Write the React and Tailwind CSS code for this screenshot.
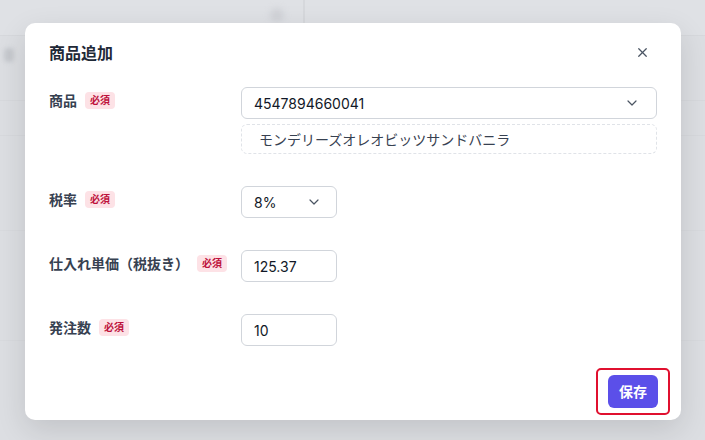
import React from "react";
import { X, ChevronDown } from "lucide-react";

const font = { fontFamily: 'Inter, "Noto Sans CJK JP", sans-serif' };

function Badge() {
  return (
    <span className="ml-2 inline-flex items-center rounded bg-[#fde2e6] px-[5px] h-[17px] text-[10px] font-bold leading-none text-[#be123c]">
      必須
    </span>
  );
}

function Label({ children }) {
  return (
    <div className="flex w-[192px] shrink-0 items-center pt-[2px] h-[24px]">
      <span className="text-[14px] font-bold text-[#374151]">{children}</span>
      <Badge />
    </div>
  );
}

export default function App() {
  return (
    <div
      className="relative h-[440px] w-[705px] overflow-hidden bg-[#dcdee2]"
      style={font}
    >
      {/* faint background page */}
      <div className="absolute left-0 top-0 h-[36px] w-[705px] border-b border-[#d6d8dc] bg-[#dfe1e5]" />
      <div className="absolute left-[270px] top-[8px] h-[14px] w-[14px] rounded-full bg-[#d0d2d7] blur-[3px]" />
      <div className="absolute left-[303px] top-0 h-[36px] w-[2px] bg-[#d6d8dc]" />
      <div className="absolute left-[4px] top-[48px] h-[14px] w-[10px] rounded bg-[#c5c8cd] blur-[2px]" />
      <div className="absolute left-0 top-[100px] h-[1px] w-[705px] bg-[#d7d9dd]" />
      <div className="absolute left-0 top-[135px] h-[1px] w-[705px] bg-[#d7d9dd]" />
      <div className="absolute left-0 top-[230px] h-[1px] w-[705px] bg-[#d8dade]" />
      <div className="absolute left-0 top-[340px] h-[1px] w-[705px] bg-[#d8dade]" />

      {/* dialog */}
      <div className="absolute left-[25px] top-[23px] flex h-[397px] w-[656px] flex-col rounded-[10px] bg-white shadow-[0_10px_30px_rgba(0,0,0,0.12)]">
        <div className="flex h-[64px] items-start justify-between px-6 pt-[18px]">
          <h2 className="text-[16px] font-bold text-[#1f2937]">商品追加</h2>
          <X size={15} strokeWidth={2} className="mr-[7px] mt-[4px] text-[#4b5563]" />
        </div>

        <div className="flex flex-col gap-8 px-6">
          <div className="flex items-start">
            <Label>商品</Label>
            <div className="flex flex-1 flex-col gap-[5px]">
              <div className="flex h-8 items-center justify-between rounded-md border border-[#d1d5db] pl-[12px] pr-[16px]">
                <span className="text-[14px] text-[#111827]">4547894660041</span>
                <ChevronDown size={16} strokeWidth={1.8} className="text-[#4b5563]" />
              </div>
              <div className="flex h-[30px] items-center rounded-md border border-dashed border-[#e0e3e8] pl-[17px]">
                <span className="text-[14px] text-[#374151]">モンデリーズオレオビッツサンドバニラ</span>
              </div>
            </div>
          </div>

          <div className="flex items-start">
            <Label>税率</Label>
            <div className="flex h-8 w-[96px] items-center justify-between rounded-md border border-[#d1d5db] pl-[12px] pr-[14px]">
              <span className="text-[14px] text-[#111827]">8%</span>
              <ChevronDown size={16} strokeWidth={1.8} className="text-[#4b5563]" />
            </div>
          </div>

          <div className="flex items-start">
            <Label>仕入れ単価（税抜き）</Label>
            <div className="flex h-8 w-[96px] items-center rounded-md border border-[#d1d5db] pl-[12px]">
              <span className="text-[14px] text-[#111827]">125.37</span>
            </div>
          </div>

          <div className="flex items-start">
            <Label>発注数</Label>
            <div className="flex h-8 w-[96px] items-center rounded-md border border-[#d1d5db] pl-[12px]">
              <span className="text-[14px] text-[#111827]">10</span>
            </div>
          </div>
        </div>

        <div className="mt-auto flex justify-end pb-[5px] pr-[11px]">
          <div className="rounded-[5px] border-2 border-[#e0102f] p-[5px] px-[10px]">
            <button className="flex h-[33px] w-[50px] items-center justify-center rounded-md bg-[#5b4fe9] text-[14px] font-bold text-white">
              保存
            </button>
          </div>
        </div>
      </div>
    </div>
  );
}
